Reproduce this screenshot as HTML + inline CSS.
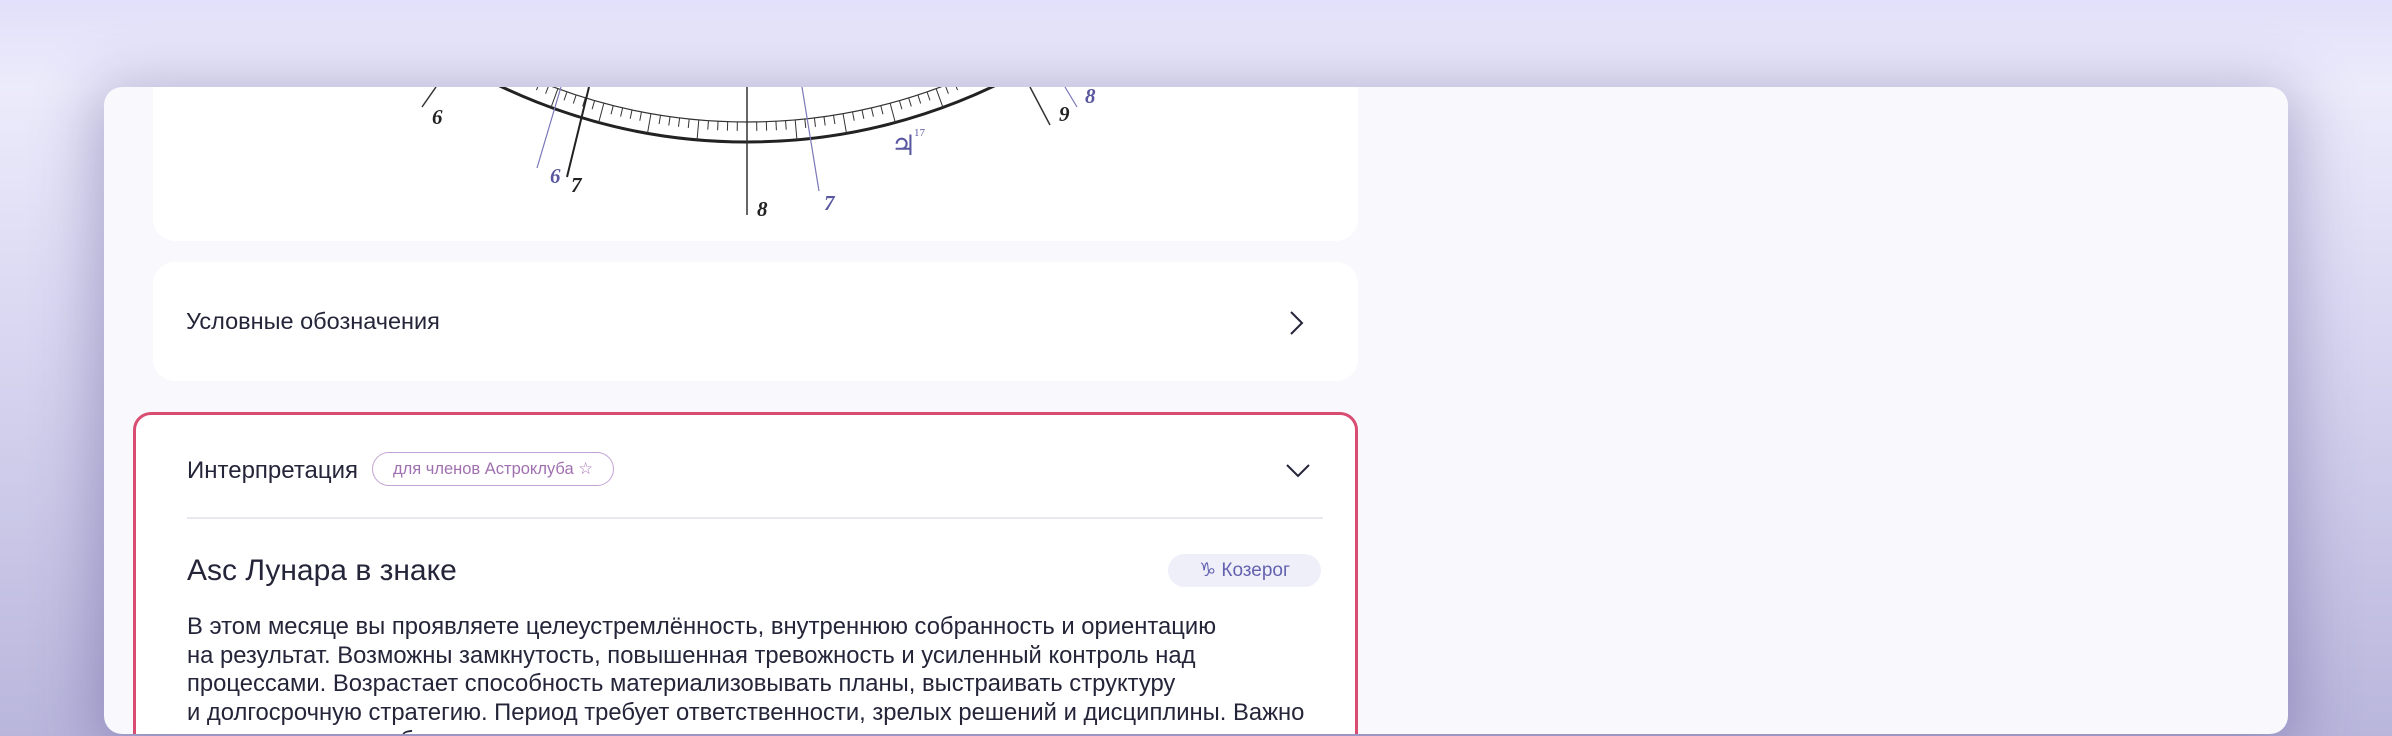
<!DOCTYPE html>
<html><head><meta charset="utf-8"><style>
html,body{margin:0;padding:0}
body{width:2392px;height:736px;overflow:hidden;position:relative;font-family:"Liberation Sans",sans-serif;
background:linear-gradient(180deg,#e2e0fa 0%,#ecebfb 12%,#dcdaf3 40%,#b9b6dc 100%);}
.panel{position:absolute;left:104px;top:87px;width:2184px;height:647px;background:#f8f8fd;border-radius:18px;overflow:hidden;
box-shadow:0 10px 60px 10px rgba(70,60,130,.35);}
.card{position:absolute;background:#fff;border-radius:22px;}
.t{color:#25253a;font-size:23.5px;position:absolute;white-space:nowrap}
</style></head><body>
<div class="panel">
 <div class="card" style="left:49px;top:-30px;width:1205px;height:184px;"></div>
 <svg style="position:absolute;left:-104px;top:-87px" width="2392" height="736" id="chart">
  <g fill="none">
   <circle cx="747" cy="-431" r="573" stroke="#222" stroke-width="3"/>
   <circle cx="747" cy="-431" r="553" stroke="#333" stroke-width="1.2"/>
   <g id="ticks" stroke="#333" stroke-width="1"></g>
   <line x1="747" y1="87" x2="747" y2="215" stroke="#333" stroke-width="1.5"/>
   <line x1="436" y1="87" x2="422" y2="107" stroke="#333" stroke-width="1.5"/>
   <line x1="589" y1="87" x2="567" y2="177" stroke="#222" stroke-width="2"/>
   <line x1="561" y1="87" x2="537" y2="168" stroke="#7a78b8" stroke-width="1.2"/>
   <line x1="802" y1="87" x2="819" y2="191" stroke="#7a78b8" stroke-width="1.2"/>
   <line x1="1030" y1="87" x2="1050" y2="125" stroke="#333" stroke-width="1.5"/>
   <line x1="1065" y1="87" x2="1077" y2="107" stroke="#7a78b8" stroke-width="1.2"/>
  </g>
  <g font-family="Liberation Serif,serif" font-style="italic" font-size="21" font-weight="bold">
   <text x="432" y="124" fill="#222">6</text>
   <text x="571" y="192" fill="#222">7</text>
   <text x="550" y="183" fill="#5a58a0">6</text>
   <text x="757" y="216" fill="#222">8</text>
   <text x="824" y="210" fill="#5a58a0">7</text>
   <text x="1059" y="121" fill="#222">9</text>
   <text x="1085" y="103" fill="#5a58a0">8</text>
   <text x="891" y="155" fill="#5a58a0" font-family="DejaVu Sans,sans-serif" font-style="normal" font-weight="normal" font-size="28">♃</text>
   <text x="914" y="136" fill="#5a58a0" font-style="normal" font-weight="normal" font-size="11">17</text>
  </g>
 </svg>
 <div class="card" style="left:49px;top:175px;width:1205px;height:119px;">
  <div class="t" style="left:33px;top:46px">Условные обозначения</div>
  <svg style="position:absolute;left:1134px;top:47px" width="20" height="28"><path d="M4 3 L15 14 L4 25" stroke="#25253a" stroke-width="2" fill="none"/></svg>
 </div>
 <div class="card" style="left:29px;top:325px;width:1219px;height:400px;border:3px solid #d94d72;border-radius:18px;">
  <div class="t" style="left:51px;top:42px;font-size:24px">Интерпретация</div>
  <div style="position:absolute;left:236px;top:37px;width:240px;height:32px;border:1.5px solid #c5a2d4;border-radius:17px;font-size:16.5px;color:#a070b0;line-height:32px;text-align:center;background:#fff;white-space:nowrap">для членов Астроклуба <span style="font-family:'DejaVu Sans',sans-serif">☆</span></div>
  <svg style="position:absolute;left:1148px;top:46px" width="28" height="20"><path d="M3 4 L14 15 L25 4" stroke="#25253a" stroke-width="2" fill="none"/></svg>
  <div style="position:absolute;left:51px;top:102px;width:1136px;height:2px;background:#e8e8f0"></div>
  <div class="t" style="left:51px;top:139px;font-size:30px">Asc Лунара в знаке</div>
  <div style="position:absolute;left:1032px;top:139px;width:153px;height:33px;background:#efeffa;border-radius:17px;color:#6462b0;font-size:19px;line-height:33px;text-align:center;white-space:nowrap"><span style="font-family:'DejaVu Sans',sans-serif">♑&#xFE0E;</span> Козерог</div>
  <div class="t" style="left:51px;top:198px;line-height:28.5px;font-size:23.8px">В этом месяце вы проявляете целеустремлённость, внутреннюю собранность и ориентацию<br>на результат. Возможны замкнутость, повышенная тревожность и усиленный контроль над<br>процессами. Возрастает способность материализовывать планы, выстраивать структуру<br>и долгосрочную стратегию. Период требует ответственности, зрелых решений и дисциплины. Важно<br>не замыкаться в себе и сохранять</div>
 </div>
</div>
<script>
var g=document.getElementById('ticks'),s='';
for(var a=40;a<=140;a+=1){var r=a*Math.PI/180,c=Math.cos(r),sn=Math.sin(r);
var r1=553,r2=(a%5==0)?573:562;
s+='<line x1="'+(747+r1*c)+'" y1="'+(-431+r1*sn)+'" x2="'+(747+r2*c)+'" y2="'+(-431+r2*sn)+'"/>';}
g.innerHTML=s;
</script>
</body></html>
